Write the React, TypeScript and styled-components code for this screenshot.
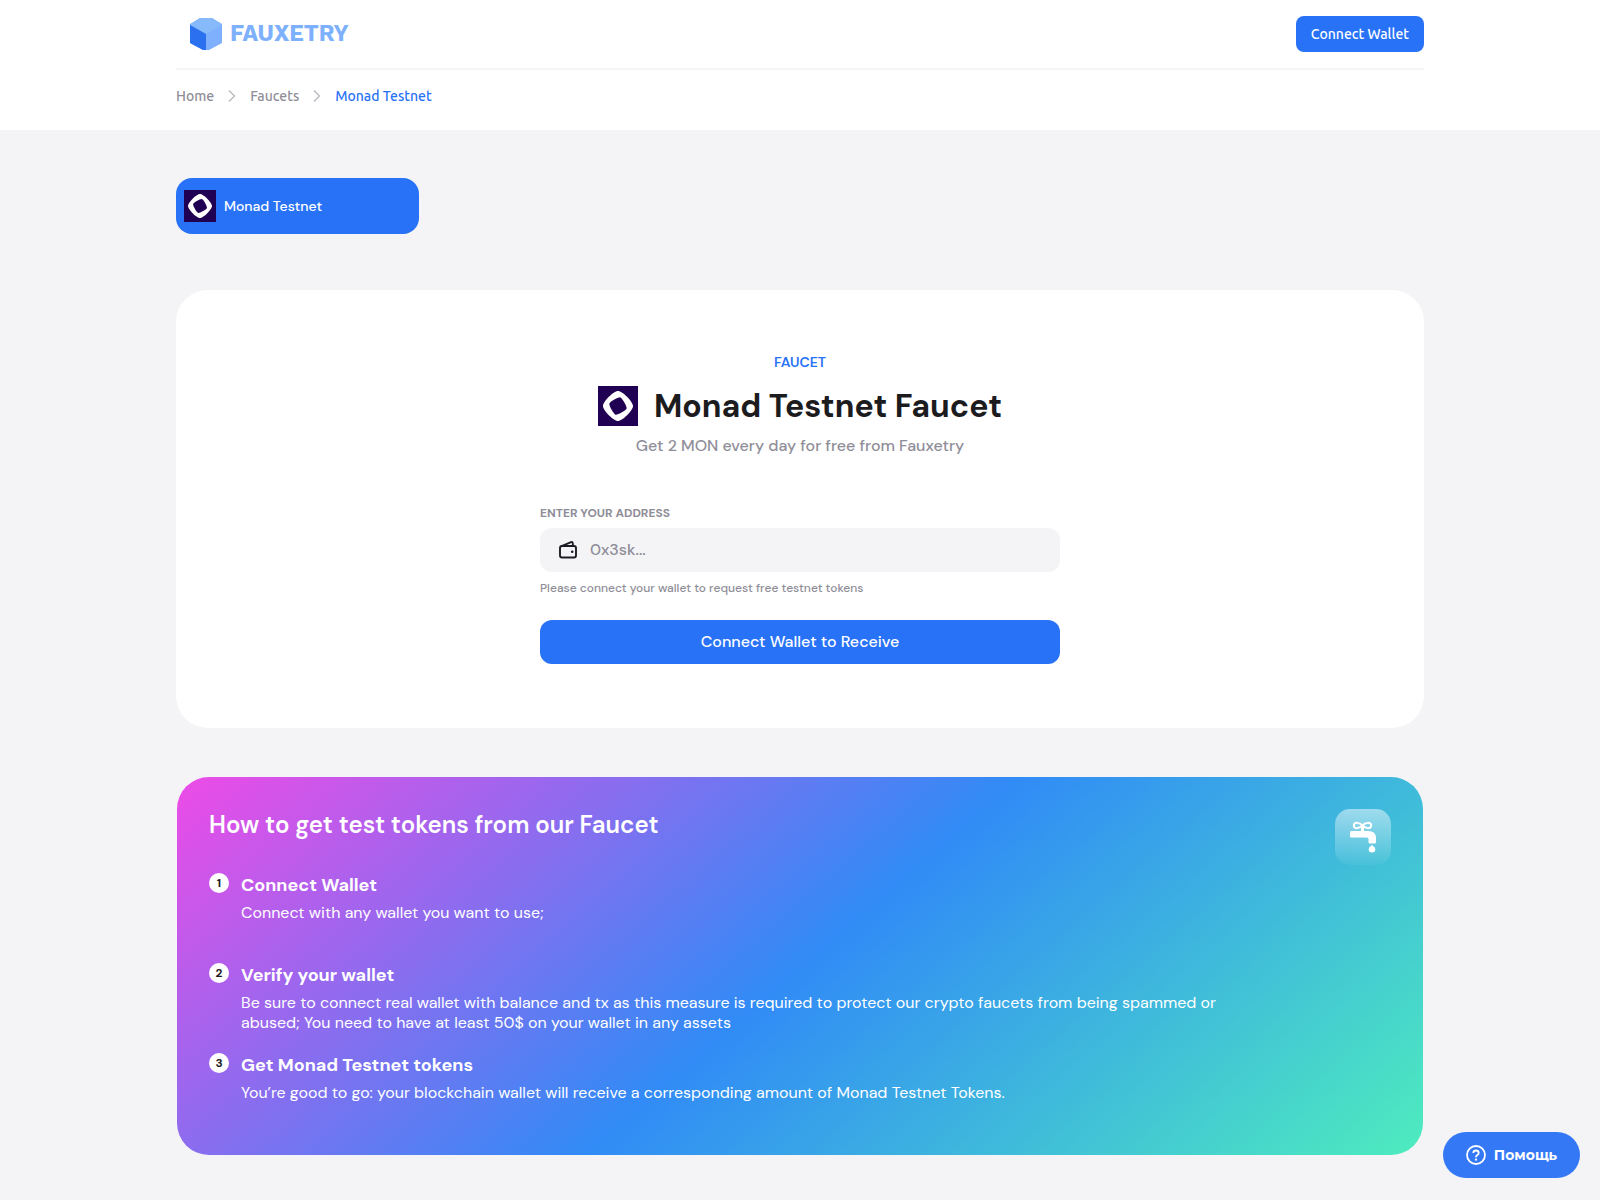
import React from "react";
import styled, { createGlobalStyle } from "styled-components";

const colors = {
  blue: "#2772f7",
  page: "#f4f4f7",
  ink: "#1c1c1f",
  muted: "#8f8e98",
  white: "#ffffff",
};

const bodyFont = `"DM Sans", Inter, "Liberation Sans", sans-serif`;
const navFont = `Ubuntu, "Noto Sans", "Open Sans", sans-serif`;

const GlobalStyle = createGlobalStyle`
  * { box-sizing: border-box; }
  body { margin: 0; background: ${colors.page}; font-family: ${bodyFont}; color: ${colors.ink}; }
  h1, h2, h3, p, ol { margin: 0; padding: 0; }
  ol { list-style: none; }
  button, input { font-family: inherit; border: 0; }
  button { cursor: pointer; }
  a { text-decoration: none; color: inherit; }
  svg { display: block; flex: none; }
`;

const Container = styled.div`
  max-width: 1280px;
  margin: 0 auto;
  padding: 0 16px;
`;

const Header = styled.header`
  background: ${colors.white};
  font-family: ${navFont};
`;

const TopBar = styled.div`
  display: flex;
  align-items: center;
  justify-content: space-between;
  padding: 16px 0;
  border-bottom: 2px solid ${colors.page};
`;

const Logo = styled.a`
  display: flex;
  align-items: center;
  gap: 8px;
  padding-left: 14px;
  font: 700 23px/32px "Work Sans", Inter, "Liberation Sans", sans-serif;
  color: #7db0fd;
`;

const WalletButton = styled.button`
  height: 36px;
  padding: 0 15px;
  border-radius: 8px;
  background: ${colors.blue};
  color: ${colors.white};
  font-size: 14px;
  font-weight: 500;
`;

const Crumbs = styled.nav`
  display: flex;
  align-items: center;
  gap: 14px;
  padding: 16px 0 24px;
  font-size: 14px;
  font-weight: 500;
  line-height: 20px;
`;

const Crumb = styled.a<{ $current?: boolean }>`
  color: ${(p) => (p.$current ? colors.blue : colors.muted)};
`;

const Main = styled.main`
  padding: 48px 0 44px;
`;

const NetworkTab = styled.button`
  display: flex;
  align-items: center;
  gap: 8px;
  width: 243px;
  height: 56px;
  padding: 0 8px;
  margin-bottom: 56px;
  border-radius: 16px;
  background: ${colors.blue};
  color: ${colors.white};
  font-size: 14px;
  font-weight: 500;
`;

const FaucetCard = styled.section`
  display: flex;
  flex-direction: column;
  align-items: center;
  padding: 64px 32px;
  border-radius: 32px;
  background: ${colors.white};
`;

const Eyebrow = styled.p`
  color: ${colors.blue};
  font-size: 14px;
  font-weight: 600;
  line-height: 16px;
`;

const TitleRow = styled.div`
  display: flex;
  align-items: center;
  gap: 16px;
  margin: 16px 0 10px;
`;

const Title = styled.h1`
  font-size: 32px;
  font-weight: 700;
  line-height: 40px;
`;

const Subtitle = styled.p`
  color: ${colors.muted};
  font-size: 16px;
  font-weight: 500;
  line-height: 20px;
`;

const Form = styled.form`
  display: flex;
  flex-direction: column;
  gap: 8px;
  width: 100%;
  max-width: 520px;
  margin-top: 48px;
`;

const Label = styled.label`
  padding-top: 2px;
  color: ${colors.muted};
  font-size: 12px;
  font-weight: 700;
  line-height: 14px;
`;

const Field = styled.div`
  display: flex;
  align-items: center;
  gap: 10px;
  height: 44px;
  padding: 0 16px;
  border-radius: 12px;
  background: ${colors.page};
`;

const AddressInput = styled.input`
  flex: 1;
  min-width: 0;
  padding: 0 0 2px;
  background: transparent;
  color: ${colors.ink};
  font-size: 16px;
  font-weight: 500;
  outline: none;
  &::placeholder { color: ${colors.muted}; opacity: 1; }
`;

const Hint = styled.p`
  color: ${colors.muted};
  font-size: 12px;
  font-weight: 500;
  line-height: 16px;
`;

const SubmitButton = styled.button`
  height: 44px;
  margin-top: 16px;
  padding: 0 16px 2px;
  border-radius: 12px;
  background: ${colors.blue};
  color: ${colors.white};
  font-size: 16px;
  font-weight: 500;
`;

const GuideCard = styled.section`
  display: flex;
  justify-content: space-between;
  align-items: flex-start;
  margin: 49px 1px 0;
  padding: 32px;
  border-radius: 32px;
  background: linear-gradient(139deg, #ee4be7 0%, #318bf6 50%, #4eecbe 100%);
  color: ${colors.white};
`;

const GuideBody = styled.div`
  max-width: 1020px;
`;

const GuideTitle = styled.h2`
  margin-bottom: 32px;
  font-size: 24px;
  font-weight: 600;
  line-height: 32px;
`;

const Steps = styled.ol`
  display: flex;
  flex-direction: column;
  gap: 20px;
`;

const Step = styled.li`
  display: flex;
  align-items: flex-start;
  gap: 12px;
  min-height: 70px;
`;

const StepNumber = styled.span`
  flex: none;
  width: 20px;
  border-radius: 50%;
  background: ${colors.white};
  color: ${colors.ink};
  font-size: 12px;
  font-weight: 700;
  line-height: 20px;
  text-align: center;
`;

const StepTitle = styled.h3`
  margin-bottom: 6px;
  font-size: 18px;
  font-weight: 700;
  line-height: 24px;
`;

const StepText = styled.p`
  font-size: 16px;
  line-height: 20px;
`;

const HelpButton = styled.button`
  position: fixed;
  right: 20px;
  bottom: 22px;
  display: flex;
  align-items: center;
  gap: 8px;
  height: 46px;
  padding: 0 23px;
  border-radius: 23px;
  background: #3478f6;
  color: ${colors.white};
  font-family: Montserrat, Inter, "Liberation Sans", sans-serif;
  font-size: 14px;
  font-weight: 700;
`;

const CubeLogo = () => (
  <svg width="32" height="32" viewBox="0 0 32 32" aria-hidden="true">
    <path d="M10 0H22L32 6V25L19 32H13L0 25V6Z" fill="#7eb0fe" />
    <path d="M10 0H22L32 7L16 16L0 7Z" fill="#86bafa" />
    <path d="M0 7L16 16V32H13L0 25Z" fill="#2a70ef" />
  </svg>
);

const Chevron = () => (
  <svg width="8" height="12" viewBox="0 0 8 12" aria-hidden="true">
    <path d="M1 0.5L6.5 6L1 11.5" fill="none" stroke="#b9b8c2" strokeWidth="1.3" />
  </svg>
);

const MonadMark = ({ size }: { size: number }) => (
  <svg width={size} height={size} viewBox="0 0 32 32" aria-hidden="true">
    <rect width="32" height="32" fill="#200052" />
    <path
      fill="#fff"
      fillRule="evenodd"
      d="M16 4C12.500 4 4 12.500 4 16S12.500 28 16 28S28 19.500 28 16S19.500 4 16 4ZM14.100 22.900C12.600 22.500 8.700 15.600 9.100 14.100S16.400 8.700 17.900 9.100S23.300 16.400 22.900 17.900S15.600 23.300 14.100 22.900Z"
    />
  </svg>
);

const WalletIcon = () => (
  <svg width="24" height="24" viewBox="0 0 24 24" fill="none" stroke="#1c1c24" strokeWidth="1.9" aria-hidden="true">
    <rect x="4" y="8" width="16" height="11.500" rx="2" />
    <path d="M5 8.300L15 4.100Q16.500 3.600 16.700 5L17 8" />
    <circle cx="16.200" cy="13.700" r="1.300" fill="#1c1c24" stroke="none" />
  </svg>
);

const FaucetIcon = () => (
  <svg width="56" height="56" viewBox="0 0 56 56" aria-hidden="true">
    <defs>
      <linearGradient id="tile" x1="0" y1="0" x2="0" y2="1">
        <stop offset="0" stopColor="#fff" stopOpacity="0.5" />
        <stop offset="1" stopColor="#fff" stopOpacity="0.04" />
      </linearGradient>
    </defs>
    <rect width="56" height="56" rx="15" fill="url(#tile)" />
    <g fill="none" stroke="#fff" strokeWidth="2">
      <path d="M27.500 16.500C25 13.500 18.800 12.500 18.800 16.500S25 19.500 27.500 16.500C30 13.500 36.200 12.500 36.200 16.500S30 19.500 27.500 16.500Z" />
    </g>
    <path
      fill="#fff"
      d="M26 17H29V22H33Q41 22 41 29V33Q41 34.500 39.500 34.500H35Q33.500 34.500 33.500 33V30Q33.500 28.500 32 28.500H16.500Q15 28.500 15 27V23.500Q15 22 16.500 22H26Z"
    />
    <path fill="#fff" d="M37 36C38.500 37.500 40.300 38.500 40.300 40.200A3.300 3.300 0 0 1 33.700 40.200C33.700 38.500 35.500 37.500 37 36Z" />
  </svg>
);

const HelpIcon = () => (
  <svg width="20" height="20" viewBox="0 0 20 20" fill="none" stroke="#fff" strokeWidth="1.8" aria-hidden="true">
    <circle cx="10" cy="10" r="9" />
    <path d="M7.300 8Q7.300 5.500 10 5.500T12.700 7.900Q12.700 9.200 11.300 10T10 12.400" />
    <circle cx="10" cy="14.700" r="1.100" fill="#fff" stroke="none" />
  </svg>
);

const steps = [
  { title: "Connect Wallet", text: "Connect with any wallet you want to use;" },
  {
    title: "Verify your wallet",
    text: "Be sure to connect real wallet with balance and tx as this measure is required to protect our crypto faucets from being spammed or abused; You need to have at least 50$ on your wallet in any assets",
  },
  {
    title: "Get Monad Testnet tokens",
    text: "You’re good to go: your blockchain wallet will receive a corresponding amount of Monad Testnet Tokens.",
  },
];

export default function App() {
  return (
    <>
      <GlobalStyle />
      <Header>
        <Container>
          <TopBar>
            <Logo href="#">
              <CubeLogo />
              FAUXETRY
            </Logo>
            <WalletButton type="button">Connect Wallet</WalletButton>
          </TopBar>
          <Crumbs aria-label="Breadcrumb">
            <Crumb href="#">Home</Crumb>
            <Chevron />
            <Crumb href="#">Faucets</Crumb>
            <Chevron />
            <Crumb href="#" $current aria-current="page">
              Monad Testnet
            </Crumb>
          </Crumbs>
        </Container>
      </Header>
      <Main>
        <Container>
          <NetworkTab type="button">
            <MonadMark size={32} />
            Monad Testnet
          </NetworkTab>
          <FaucetCard>
            <Eyebrow>FAUCET</Eyebrow>
            <TitleRow>
              <MonadMark size={40} />
              <Title>Monad Testnet Faucet</Title>
            </TitleRow>
            <Subtitle>Get 2 MON every day for free from Fauxetry</Subtitle>
            <Form onSubmit={(e) => e.preventDefault()}>
              <Label htmlFor="address">ENTER YOUR ADDRESS</Label>
              <Field>
                <WalletIcon />
                <AddressInput id="address" type="text" placeholder="0x3sk..." />
              </Field>
              <Hint>Please connect your wallet to request free testnet tokens</Hint>
              <SubmitButton type="submit">Connect Wallet to Receive</SubmitButton>
            </Form>
          </FaucetCard>
          <GuideCard>
            <GuideBody>
              <GuideTitle>How to get test tokens from our Faucet</GuideTitle>
              <Steps>
                {steps.map((step, index) => (
                  <Step key={step.title}>
                    <StepNumber>{index + 1}</StepNumber>
                    <div>
                      <StepTitle>{step.title}</StepTitle>
                      <StepText>{step.text}</StepText>
                    </div>
                  </Step>
                ))}
              </Steps>
            </GuideBody>
            <FaucetIcon />
          </GuideCard>
        </Container>
      </Main>
      <HelpButton type="button">
        <HelpIcon />
        Помощь
      </HelpButton>
    </>
  );
}
